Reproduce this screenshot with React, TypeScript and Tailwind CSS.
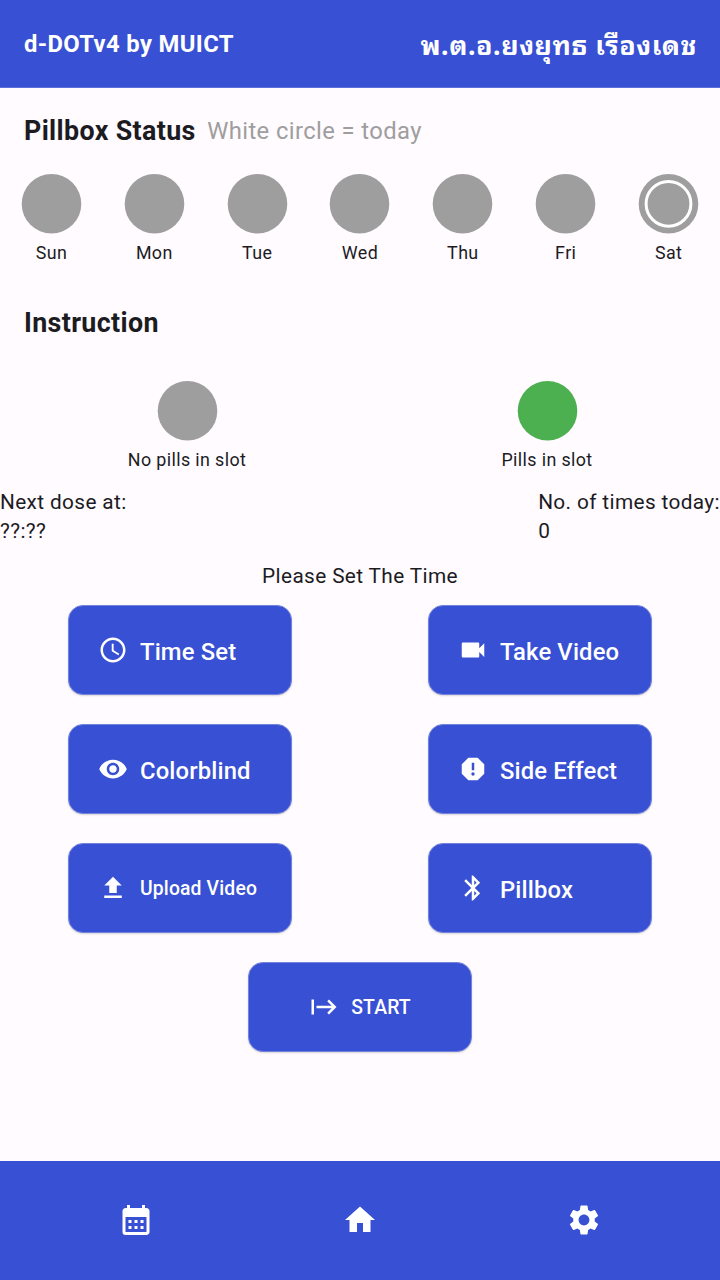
import type { IconType } from "react-icons";
import {
  MdAccessTime,
  MdBluetooth,
  MdCalendarMonth,
  MdHome,
  MdReport,
  MdSettings,
  MdStart,
  MdUpload,
  MdVideocam,
  MdVisibility,
} from "react-icons/md";

const DAYS = ["Sun", "Mon", "Tue", "Wed", "Thu", "Fri", "Sat"];
const TODAY = "Sat";

type Action = { label: string; icon: IconType; small?: boolean };

const ACTIONS: Action[] = [
  { label: "Time Set", icon: MdAccessTime },
  { label: "Take Video", icon: MdVideocam },
  { label: "Colorblind", icon: MdVisibility },
  { label: "Side Effect", icon: MdReport },
  { label: "Upload Video", icon: MdUpload, small: true },
  { label: "Pillbox", icon: MdBluetooth },
];

const BUTTON =
  "flex h-[90px] w-[224px] items-center rounded-[15px] border border-[#7484de] bg-[#3850d3] font-medium text-white shadow-[0_1px_2px_rgba(0,0,0,0.16)]";

function Slot({ label, color, today }: { label: string; color: string; today?: boolean }) {
  return (
    <div className="flex flex-col items-center">
      <svg viewBox="0 0 61 60" className={`h-[60px] w-[61px] ${color}`}>
        <circle cx="30.5" cy="29.8" r="29.8" fill="currentColor" />
        {today && (
          <circle cx="30.5" cy="29.8" r="22.4" fill="none" stroke="#fff" strokeWidth="3" />
        )}
      </svg>
      <span className="mt-[7px] text-[17.86px] leading-6 tracking-[0.38px]">{label}</span>
    </div>
  );
}

function ActionButton({ label, icon: Icon, small }: Action) {
  return (
    <button className={`${BUTTON} pl-[29px]`}>
      <Icon className="size-[30px]" />
      <span
        className={
          small
            ? "mt-0.5 ml-3 text-[19.35px] tracking-[0.15px]"
            : "mt-1.5 ml-3 text-[23.8px] tracking-[0.15px]"
        }
      >
        {label}
      </span>
    </button>
  );
}

export default function App() {
  return (
    <div className="flex h-[1280px] w-[720px] flex-col overflow-hidden bg-[#fffbff] font-['Roboto',sans-serif] text-[#1c1b1f]">
      <header className="flex h-[88px] shrink-0 items-center justify-between border-b border-[#5b6fdb] bg-[#3850d3] px-6 font-bold text-white">
        <h1 className="text-[23.8px] leading-7 tracking-[0.37px]">d-DOTv4 by MUICT</h1>
        <span className="-mr-px mb-0.5 font-['Noto_Sans_Thai_Looped','Roboto',sans-serif] text-[26.8px] leading-7 tracking-[0.58px] whitespace-nowrap">
          พ.ต.อ.ยงยุทธ เรืองเดช
        </span>
      </header>

      <main className="flex grow flex-col">
        <div className="mt-[27px] flex h-8 items-center px-6">
          <h2 className="text-[26.8px] leading-8 font-bold tracking-[0.37px]">Pillbox Status</h2>
          <span className="ml-[11.5px] text-[23.8px] leading-8 tracking-[0.4px] text-[#9e9e9e]">
            White circle = today
          </span>
        </div>

        <div className="mt-[27px] grid grid-cols-7">
          {DAYS.map((day) => (
            <Slot key={day} label={day} color="text-[#9e9e9e]" today={day === TODAY} />
          ))}
        </div>

        <h2 className="mt-[42px] px-6 text-[26.8px] leading-8 font-bold tracking-[0.37px]">
          Instruction
        </h2>

        <div className="mt-[42px] grid grid-cols-2">
          <div className="pl-[14px]">
            <Slot label="No pills in slot" color="text-[#9e9e9e]" />
          </div>
          <div className="pl-[14px]">
            <Slot label="Pills in slot" color="text-[#4caf50]" />
          </div>
        </div>

        <div className="mt-4 flex justify-between text-[20.8px] leading-[29px] tracking-[0.37px]">
          <p>
            Next dose at:
            <br />
            ??:??
          </p>
          <p>
            No. of times today:
            <br />0
          </p>
        </div>

        <p className="mt-4 text-center text-[20.8px] leading-[29px] tracking-[0.37px]">
          Please Set The Time
        </p>

        <div className="mt-[14px] grid grid-cols-2 justify-items-center gap-y-[29px]">
          {ACTIONS.map((action) => (
            <ActionButton key={action.label} {...action} />
          ))}
        </div>

        <button className={`${BUTTON} mt-[29px] justify-center self-center`}>
          <MdStart className="size-[30px]" />
          <span className="mt-0.5 ml-3 text-[19.35px] tracking-[0.15px]">START</span>
        </button>
      </main>

      <nav className="flex h-[119px] shrink-0 items-center justify-between bg-[#3850d3] px-[118px] pb-0.5 text-white">
        <MdCalendarMonth className="size-9" />
        <MdHome className="size-9" />
        <MdSettings className="size-9" />
      </nav>
    </div>
  );
}
